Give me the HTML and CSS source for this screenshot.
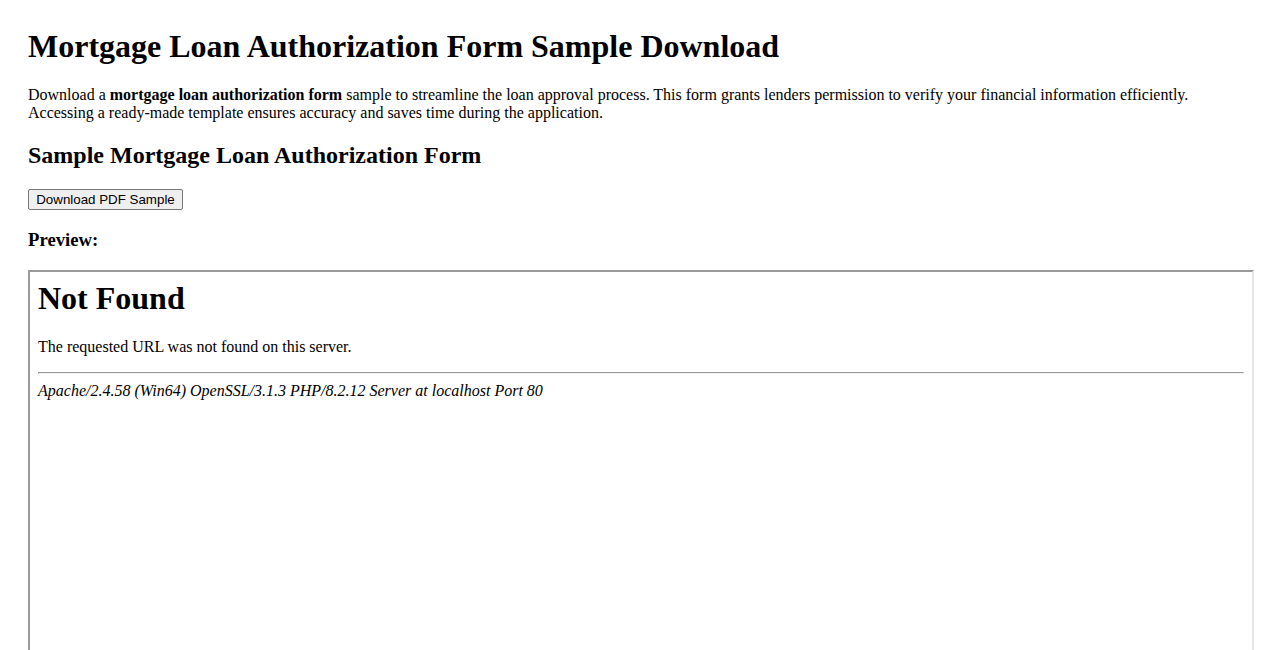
FILE: index.html
```html
<html>
<head>
<meta charset="utf-8">
<title>Mortgage Loan Authorization Form Sample Download</title>
<link rel="stylesheet" href="styles.css">
</head>
<body>
<div class="page">
  <h1 class="title">Mortgage Loan Authorization Form Sample Download</h1>
  <p class="intro">Download a <strong>mortgage loan authorization form</strong> sample to streamline the loan approval process. This form grants lenders permission to verify your financial information efficiently. Accessing a ready-made template ensures accuracy and saves time during the application.</p>
  <h2 class="subtitle">Sample Mortgage Loan Authorization Form</h2>
  <button class="download-btn" type="button">Download PDF Sample</button>
  <h3 class="preview-label">Preview:</h3>
  <div class="preview-frame">
    <div class="frame-body">
      <h1 class="nf-title">Not Found</h1>
      <p class="nf-text">The requested URL was not found on this server.</p>
      <hr class="nf-rule">
      <address class="nf-address">Apache/2.4.58 (Win64) OpenSSL/3.1.3 PHP/8.2.12 Server at localhost Port 80</address>
    </div>
  </div>
</div>
</body>
</html>
```
FILE: styles.css
```css
html, body {
  margin: 0;
  padding: 0;
  background: #ffffff;
}

body {
  font-family: "Liberation Serif", "Times New Roman", serif;
  font-size: 16px;
  color: #000000;
}

.page {
  padding: 28px 28px 0 28px;
}

.title {
  font-size: 32px;
  font-weight: bold;
  margin: 0 0 21.44px 0;
}

.intro {
  margin: 16px 0;
}

.subtitle {
  font-size: 24px;
  font-weight: bold;
  margin: 19.92px 0;
}

.download-btn {
  display: block;
  font-family: "Liberation Sans", Arial, sans-serif;
  font-size: 13.333px;
  color: #000000;
  background: #efefef;
  border: 1px solid #767676;
  border-radius: 2px;
  padding: 1px 6px;
  height: 21px;
  width: 155px;
  margin: 0;
}

.preview-label {
  font-size: 18.72px;
  font-weight: bold;
  margin: 18.72px 0;
}

.preview-frame {
  width: 100%;
  height: 400px;
  border-style: solid;
  border-width: 2px;
  border-top-color: #9a9a9a;
  border-left-color: #9a9a9a;
  border-right-color: #e6e6e6;
  border-bottom-color: #e6e6e6;
}

.frame-body {
  padding: 8px;
}

.nf-title {
  font-size: 32px;
  font-weight: bold;
  margin: 0 0 21.44px 0;
}

.nf-text {
  margin: 16px 0;
}

.nf-rule {
  margin: 8px 0;
  height: 0;
  border-style: solid;
  border-width: 1px;
  border-top-color: #9a9a9a;
  border-left-color: #9a9a9a;
  border-right-color: #eeeeee;
  border-bottom-color: #eeeeee;
}

.nf-address {
  font-style: italic;
}
```
